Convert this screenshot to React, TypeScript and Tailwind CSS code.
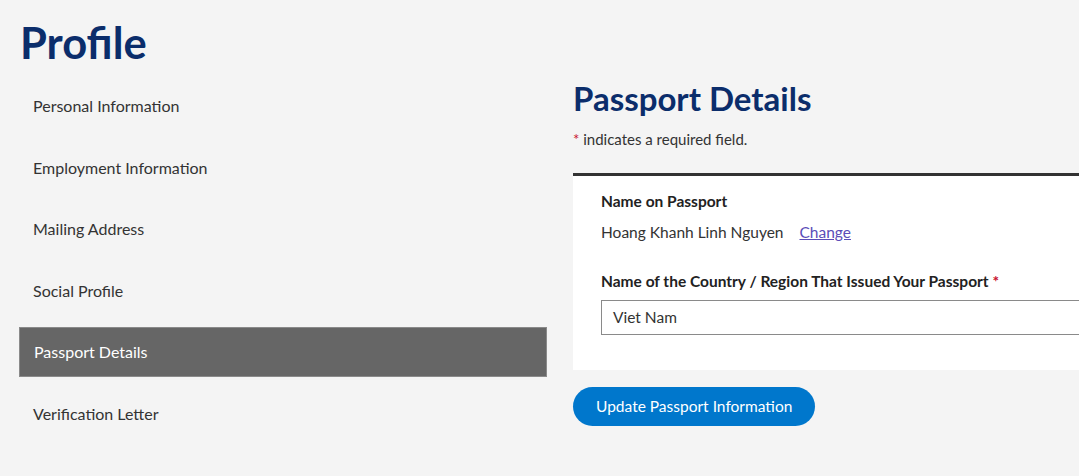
import React from 'react';

const navItems = [
    'Personal Information',
    'Employment Information',
    'Mailing Address',
    'Social Profile',
    'Passport Details',
    'Verification Letter',
];

const App: React.FC = () => {
    const active = 'Passport Details';

    return (
        <div className="w-[1079px] h-[476px] overflow-hidden bg-[#f4f4f4] text-[#333] font-['Lato',sans-serif]">
            <h1 className="pl-[20px] pt-[17px] text-[43.5px] leading-[50px] font-bold text-[#0b2d6b]">Profile</h1>
            <div className="flex">
                <nav className="w-[528px] shrink-0 ml-[19px] mt-[14px] flex flex-col gap-[11.5px]">
                    {navItems.map((item) => (
                        <div
                            key={item}
                            className={`h-[50px] flex items-center pl-[14px] text-[16px] ${item === active ? 'bg-[#666] border border-[#8a8a8a] text-white' : 'text-[#333]'}`}
                        >
                            {item}
                        </div>
                    ))}
                </nav>
                <div className="ml-[26px] w-[540px] shrink-0">
                    <h2 className="mt-[9px] text-[33px] leading-[44px] font-bold text-[#0b2d6b]">Passport Details</h2>
                    <p className="mt-[9px] text-[15px] leading-[20px] text-[#333]">
                        <span className="text-[#c8102e]">*</span> indicates a required field.
                    </p>
                    <div className="mt-[24px] bg-white border-t-[3px] border-[#333] pl-[28px] pt-[14px] pb-[35px]">
                        <div className="text-[15.5px] font-bold leading-[22px] text-[#222]">Name on Passport</div>
                        <div className="mt-[9px] text-[15.5px] leading-[22px] text-[#333]">
                            Hoang Khanh Linh Nguyen
                            <a href="#" className="ml-[16px] text-[#5b4db8] underline">Change</a>
                        </div>
                        <div className="mt-[27px] text-[15.5px] font-bold leading-[22px] text-[#222]">
                            Name of the Country / Region That Issued Your Passport <span className="text-[#c8102e]">*</span>
                        </div>
                        <div className="mt-[8px] h-[35px] border border-[#8a8a8a] flex items-center pl-[11px] text-[15.5px] text-[#333]">
                            Viet Nam
                        </div>
                    </div>
                    <button className="mt-[17px] h-[39px] px-[23px] rounded-full bg-[#0077cc] text-white text-[15.5px]">
                        Update Passport Information
                    </button>
                </div>
            </div>
        </div>
    );
};

export default App;
